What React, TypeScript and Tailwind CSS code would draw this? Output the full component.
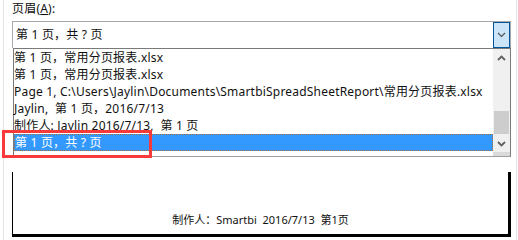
import React from "react";

const font = { fontFamily: '"Noto Sans", "Noto Sans CJK SC", sans-serif' };

function Chevron({ up = false, color = "#404040", bold = false }: { up?: boolean; color?: string; bold?: boolean }) {
  return (
    <svg width="9" height="6" viewBox="0 0 9 6">
      <path
        d={up ? "M1 5 L4.5 1.5 L8 5" : "M1 1 L4.5 4.5 L8 1"}
        fill="none"
        stroke={color}
        strokeWidth={bold ? 1.8 : 1.1}
      />
    </svg>
  );
}

const rows = [
  "第 1 页，常用分页报表.xlsx",
  "第 1 页，常用分页报表.xlsx",
  "Page 1, C:\\Users\\Jaylin\\Documents\\SmartbiSpreadSheetReport\\常用分页报表.xlsx",
  "Jaylin,  第 1 页，2016/7/13",
  "制作人: Jaylin 2016/7/13,  第 1 页",
];

export default function App() {
  return (
    <div className="relative w-[518px] h-[240px] bg-white overflow-hidden pl-[3px] pr-[1px] text-[12px] text-[#111] tracking-[0.2px]" style={font}>
      <div className="h-full border-x border-[#e3e3e3] pl-[8px] pr-[5px] flex flex-col">
        <div className="h-[21px] pt-[1px] leading-[16px] text-[12px]">
          页眉(<span className="underline">A</span>):
        </div>
        <div className="h-[27px] border border-b-0 border-[#a9a9a9] flex items-stretch w-[499px]">
          <div className="flex-1 pl-[3px] flex items-center leading-[16px] text-[12px] whitespace-pre">第 1 页，共 ? 页</div>
          <div className="w-[17px] bg-[#cce4f7] border border-[#005499] flex items-center justify-center">
            <Chevron color="#505050" />
          </div>
        </div>
        <div className="w-[498px] h-[109px] border border-[#7a7a7a] border-b-[#a0a0a0] flex ml-[1px]">
          <div className="flex-1 flex flex-col pb-[4px]">
            {rows.map((r, i) => (
              <div key={i} className="h-[17px] leading-[17px] whitespace-pre">
                {r}
              </div>
            ))}
            <div className="h-[17px] leading-[15px] whitespace-pre bg-[#3399ff] text-white border border-dotted border-[#a8703a]">
              第 1 页，共 ? 页
            </div>
          </div>
          <div className="w-[17px] bg-[#f0f0f0] flex flex-col">
            <div className="h-[17px] flex items-center justify-center">
              <Chevron up color="#606060" bold />
            </div>
            <div className="flex-1">
              <div className="mt-[45px] h-[23px] mx-[1px] bg-[#cdcdcd]" />
            </div>
            <div className="h-[17px] flex items-center justify-center">
              <Chevron color="#606060" bold />
            </div>
            <div className="h-[4px] bg-[#dadada]" />
          </div>
        </div>
        <div className="mt-[15px] w-[499px] h-[65px] border-l border-l-black border-r-[3px] border-b-[3px] border-black flex items-end justify-center pb-[6px]">
          <span className="whitespace-pre leading-[16px] text-[11px] tracking-normal">制作人：Smartbi  2016/7/13  第1页</span>
        </div>
      </div>
      <div className="absolute left-[2px] top-[130px] w-[150px] h-[28px] border-[3px] border-[#f93a3a]" />
    </div>
  );
}
